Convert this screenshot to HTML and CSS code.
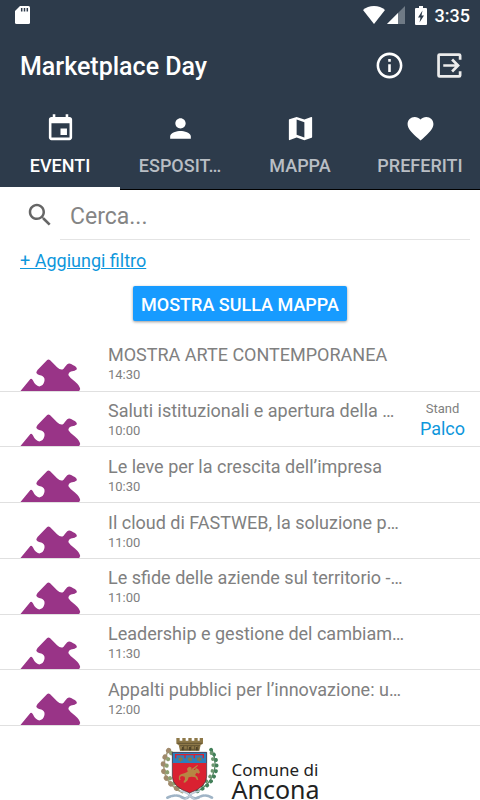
FILE: index.html
```html
<!DOCTYPE html>
<html lang="it">
<head>
    <meta charset="UTF-8">
    <meta name="viewport" content="width=device-width, initial-scale=1.0">
    <link rel="stylesheet" href="styles.css">
    <title>Marketplace Day</title>
</head>
<body>

<header class="header">
    <div class="status-bar">
        <svg class="sd" width="15" height="18" viewBox="0 0 15 18"><path fill="#fff" d="M5 0h8.500q1.500 0 1.500 1.500v15q0 1.500-1.500 1.500h-12q-1.500 0-1.500-1.500V5z"/><path stroke="#2d3b4b" stroke-width="1.500" d="M6.700 2v3.500M9.500 2v3.500M12.300 2v3.500"/></svg>
        <svg class="wifi" width="22" height="18" viewBox="0 0 22 18"><path fill="#fff" d="M11 18L0 4Q4.500 0 11 0t11 4z"/></svg>
        <svg class="signal" width="18" height="18" viewBox="0 0 18 18"><path fill="#6f7a85" d="M18 0v18H0z"/><path fill="#fff" d="M11 7v11H0z"/></svg>
        <svg class="battery" width="12" height="19" viewBox="0 0 12 19"><path fill="#fff" d="M4 0h4v2h3q1 0 1 1v15q0 1-1 1H1q-1 0-1-1V3q0-1 1-1h3z"/><path fill="#2d3b4b" d="M7.500 4.500L3 11.500h2.500L4.500 16.500 9 9.500H6.500z"/></svg>
        <span class="clock">3:35</span>
    </div>

    <div class="toolbar">
        <h1 class="title">Marketplace Day</h1>
        <button class="icon-button" type="button" aria-label="Informazioni">
            <svg width="31" height="31" viewBox="0 0 24 24"><path fill="#fff" d="M11 17h2v-6h-2v6zm1-15C6.480 2 2 6.480 2 12s4.480 10 10 10 10-4.480 10-10S17.520 2 12 2zm0 18c-4.410 0-8-3.590-8-8s3.590-8 8-8 8 3.590 8 8-3.590 8-8 8zM11 9h2V7h-2v2z"/></svg>
        </button>
        <button class="icon-button" type="button" aria-label="Esci">
            <svg width="25" height="25" viewBox="0 0 24 24" fill="none" stroke="#ececec" stroke-width="2.600"><path d="M22.200 6.500V2.500q0-1-1-1H2.500q-1 0-1 1v19q0 1 1 1h18.700q1 0 1-1v-4"/><path d="M6 12h14M14.500 6.300L20.200 12l-5.700 5.700"/></svg>
        </button>
    </div>

    <nav class="tabs">
        <button class="tab active" type="button">
            <svg viewBox="0 0 24 24"><path d="M17 12h-5v5h5v-5zM16 1v2H8V1H6v2H5c-1.110 0-1.990.9-1.990 2L3 19c0 1.100.89 2 2 2h14c1.100 0 2-.9 2-2V5c0-1.100-.9-2-2-2h-1V1h-2zm3 18H5V8h14v11z"/></svg>
            <span>EVENTI</span>
        </button>
        <button class="tab" type="button">
            <svg viewBox="0 0 24 24"><path d="M12 12c2.210 0 4-1.790 4-4s-1.790-4-4-4-4 1.790-4 4 1.790 4 4 4zm0 2c-2.670 0-8 1.340-8 4v2h16v-2c0-2.660-5.330-4-8-4z"/></svg>
            <span>ESPOSIT…</span>
        </button>
        <button class="tab" type="button">
            <svg viewBox="0 0 24 24"><path d="M20.500 3l-.16.03L15 5.100 9 3 3.360 4.900c-.21.07-.36.25-.36.48V20.500c0 .28.22.5.5.5l.16-.03L9 18.900l6 2.100 5.640-1.900c.21-.07.36-.25.36-.48V3.500c0-.28-.22-.5-.5-.5zM15 19l-6-2.110V5l6 2.110V19z"/></svg>
            <span>MAPPA</span>
        </button>
        <button class="tab" type="button">
            <svg viewBox="0 0 24 24"><path d="M12 21.350l-1.450-1.320C5.400 15.360 2 12.280 2 8.500 2 5.420 4.420 3 7.500 3c1.740 0 3.410.81 4.500 2.090C13.090 3.810 14.760 3 16.500 3 19.580 3 22 5.420 22 8.500c0 3.780-3.400 6.860-8.550 11.540L12 21.350z"/></svg>
            <span>PREFERITI</span>
        </button>
    </nav>
</header>

<!-- one symbol shared by all the rows -->
<svg class="defs" aria-hidden="true">
    <symbol id="puzzle" viewBox="61 71 182 97">
        <path fill="#993487" d="M61 168L91 132Q95 129 99 136Q106 152 118 154Q130 152 133 140Q137 126 124 121Q109 118 109 111Q110 106 120 97L142 74Q146 70 151 75L172 96Q183 106 191 101Q197 94 202 88Q209 81 221 90Q232 95 232 102Q227 107 214 109Q204 114 207 121Q212 130 226 139Q241 152 242 162L239 168Z"/>
    </symbol>
</svg>

<main class="content">
    <div class="search">
        <label for="search" aria-label="Cerca">
            <svg width="30" height="30" viewBox="0 0 24 24"><path fill="#666" d="M15.500 14h-.79l-.28-.27C15.410 12.590 16 11.110 16 9.500 16 5.910 13.090 3 9.500 3S3 5.910 3 9.500 5.910 16 9.500 16c1.610 0 3.090-.59 4.230-1.570l.27.28v.79l5 4.990L20.490 19l-4.990-5zm-6 0C7.010 14 5 11.990 5 9.500S7.010 5 9.500 5 14 7.010 14 9.500 11.990 14 9.500 14z"/></svg>
        </label>
        <input type="text" id="search" placeholder="Cerca...">
    </div>
    <a class="filter" href="#">+ Aggiungi filtro</a>
    <button class="map-button" type="button">MOSTRA SULLA MAPPA</button>

    <ul class="events">
        <li class="event">
            <svg class="piece"><use href="#puzzle"/></svg>
            <div class="info"><p class="name">MOSTRA ARTE CONTEMPORANEA</p><p class="small">14:30</p></div>
        </li>
        <li class="event">
            <svg class="piece"><use href="#puzzle"/></svg>
            <div class="info"><p class="name">Saluti istituzionali e apertura della …</p><p class="small">10:00</p></div>
            <div class="stand"><p class="small">Stand</p><a class="place" href="#">Palco</a></div>
        </li>
        <li class="event">
            <svg class="piece"><use href="#puzzle"/></svg>
            <div class="info"><p class="name">Le leve per la crescita dell’impresa</p><p class="small">10:30</p></div>
        </li>
        <li class="event">
            <svg class="piece"><use href="#puzzle"/></svg>
            <div class="info"><p class="name">Il cloud di FASTWEB, la soluzione p…</p><p class="small">11:00</p></div>
        </li>
        <li class="event">
            <svg class="piece"><use href="#puzzle"/></svg>
            <div class="info"><p class="name">Le sfide delle aziende sul territorio -…</p><p class="small">11:00</p></div>
        </li>
        <li class="event">
            <svg class="piece"><use href="#puzzle"/></svg>
            <div class="info"><p class="name">Leadership e gestione del cambiam…</p><p class="small">11:30</p></div>
        </li>
        <li class="event">
            <svg class="piece"><use href="#puzzle"/></svg>
            <div class="info"><p class="name">Appalti pubblici per l’innovazione: u…</p><p class="small">12:00</p></div>
        </li>
    </ul>
</main>

<footer class="sponsor">
    <svg class="crest" width="60" height="63" viewBox="30 36 180 189">
        <!-- branches -->
        <g fill="none" stroke-linecap="round">
            <path stroke="#a9a483" stroke-width="5" d="M58 72Q40 100 42 130Q46 176 98 203"/>
            <path stroke="#a08a6c" stroke-width="15" stroke-dasharray="1 21" d="M56 76Q36 104 40 134Q46 176 98 200"/>
            <path stroke="#8d9f70" stroke-width="12" stroke-dasharray="1 19" d="M64 84Q48 108 50 134Q56 170 96 190"/>
            <path stroke="#578762" stroke-width="4" d="M185 72Q200 104 193 136Q184 178 138 202"/>
            <path stroke="#43805a" stroke-width="11" stroke-dasharray="1 16" d="M183 74Q206 106 198 138Q188 180 140 200"/>
            <path stroke="#6d9670" stroke-width="10" stroke-dasharray="1 17" d="M184 84Q192 110 188 134Q180 168 142 190"/>
            <path stroke="#9fb4c6" stroke-width="8" stroke-dasharray="9 5" d="M52 218Q78 206 94 216Q112 226 119 210Q130 226 148 216Q164 206 186 218"/>
            <path stroke="#bccbd8" stroke-width="5" d="M92 198Q116 204 134 224M148 198Q122 204 104 224"/>
        </g>
        <!-- mural crown -->
        <path fill="#8d7848" d="M79 39h10v8h8v-8h10v8h8v-8h10v8h8v-8h10v8h6v-8h10v17l-7 4-4 18H90l-4-18-7-4z"/>
        <path stroke="#4e4228" stroke-width="2" fill="none" d="M82 55h74M90 62h60M92 73h55M101 63v10M112 63v10M123 63v10M134 63v10M144 63v10"/>
        <path fill="#4e4228" d="M96 66h5v10h-5zM117 66h6v10h-6zM138 66h5v10h-5z"/>
        <!-- shield -->
        <path fill="#d92131" d="M67 82h103v72q0 32-51 50q-52-18-52-50z"/>
        <path fill="#2b80bd" d="M67 82h103v32H67z"/>
        <path fill="none" stroke="#d92131" stroke-width="4" d="M77 100v-11h83v11M105 90v10M133 90v10"/>
        <path fill="none" stroke="#35303a" stroke-width="2" d="M67 82h103v72q0 32-51 50q-52-18-52-50z"/>
        <g fill="#8d7442">
            <path d="M92 94l3 5 4-1-2 5 2 4-5-1-2 5-3-5-4 1 1-5-2-5 5 2zM120 94l3 5 4-1-2 5 2 4-5-1-2 5-3-5-4 1 1-5-2-5 5 2zM148 94l3 5 4-1-2 5 2 4-5-1-2 5-3-5-4 1 1-5-2-5 5 2z"/>
        </g>
        <!-- knight -->
        <path fill="#b78643" d="M96 153q-9 2-4 12l-4 1q-5-13 5-18l12-4 8-4-2-9 6-6 7 2 1 7 10 1 3-6 7 4 5 9-4 4-6-3-5 7 7 5 3 9-4 1-5-8-11-2-9 2-3 9-8 7-5-1 5-9-1-8zM125 132l17-12 2 2-15 14z"/>
    </svg>
    <div class="city">
        <span class="city-small">Comune di</span>
        <span class="city-name">Ancona</span>
    </div>
</footer>

</body>
</html>
```

FILE: styles.css
```css
* {
    box-sizing: border-box;
}
body {
    display: flex;
    flex-direction: column;
    height: 100vh;
    margin: 0;
    background: #fff;
    color: #808080;
    font-family: Roboto, "Liberation Sans", sans-serif;
}
button {
    padding: 0;
    border: none;
    background: none;
    font-family: inherit;
    cursor: pointer;
}
p, h1, ul {
    margin: 0;
    padding: 0;
}
.defs {
    position: absolute;
    width: 0;
    height: 0;
}

/* header */
.header {
    background: #2d3b4b;
    color: #fff;
}
.status-bar {
    display: flex;
    align-items: center;
    height: 30px;
    padding: 0 10px 0 15px;
}
.sd {
    margin-right: auto;
}
.wifi {
    margin-right: 2px;
}
.signal {
    margin-right: 10px;
}
.battery {
    margin-right: 8px;
}
.clock {
    padding-top: 2px;
    font-size: 18px;
    font-weight: 500;
    line-height: 22px;
}
.toolbar {
    display: flex;
    align-items: center;
    height: 70px;
    padding-right: 15px;
    padding-left: 20px;
}
.title {
    flex: 1;
    padding-top: 2px;
    font-size: 25px;
    font-weight: 500;
}
.icon-button {
    display: flex;
    justify-content: center;
    align-items: center;
    width: 31px;
    height: 31px;
    margin-left: 29px;
}
.icon-button svg {
    flex: none;
}
.tabs {
    display: flex;
    height: 90px;
    border-bottom: 1px solid #000;
}
.tab {
    position: relative;
    display: flex;
    flex: 1;
    flex-direction: column;
    align-items: center;
    gap: 11px;
    padding-top: 13px;
    color: #b9bec4;
    font-size: 18px;
    font-weight: 500;
    line-height: 22px;
}
.tab svg {
    width: 31px;
    height: 31px;
    fill: #fff;
}
.tab.active {
    color: #fff;
}
.tab.active::after {
    content: "";
    position: absolute;
    right: 0;
    bottom: -1px;
    left: 0;
    height: 3px;
    background: #fff;
}

/* search and filters */
.content {
    display: flex;
    flex: 1;
    flex-direction: column;
}
.search {
    display: flex;
    align-items: center;
    height: 50px;
    padding: 0 10px 0 25px;
}
.search label {
    width: 35px;
    height: 30px;
}
.search input {
    flex: 1;
    min-width: 0;
    height: 50px;
    padding: 3px 10px 0;
    border: none;
    border-bottom: 1px solid #e4e4e4;
    outline: none;
    background: none;
    color: #444;
    font-family: inherit;
    font-size: 23px;
}
.search input::placeholder {
    color: #858585;
}
.filter {
    align-self: flex-start;
    margin: 10px 20px 0;
    color: #0e97dc;
    font-size: 18px;
    line-height: 22px;
}
.map-button {
    align-self: center;
    height: 35px;
    margin: 14px 0 15px;
    padding: 2px 8px 0;
    border-radius: 2px;
    background: #179bff;
    box-shadow: 0 1px 3px rgba(0, 0, 0, 0.4);
    color: #fff;
    font-size: 18px;
    font-weight: 500;
}

/* event list */
.events {
    display: flex;
    flex: 1;
    flex-direction: column;
    list-style: none;
}
.event {
    display: flex;
    flex: 1;
    align-items: center;
    padding: 2px 15px 0 20px;
    border-bottom: 1px solid #e0e0e0;
}
.piece {
    align-self: flex-end;
    width: 61px;
    height: 32px;
    margin-right: 27px;
}
.info {
    flex: 1;
    min-width: 0;
}
.name,
.place {
    font-size: 18px;
    line-height: 22px;
}
.small {
    font-size: 13px;
    line-height: 18px;
}
.stand {
    text-align: center;
}
.place {
    display: block;
    color: #0e97dc;
    text-decoration: none;
}

/* sponsor */
.sponsor {
    display: flex;
    justify-content: center;
    gap: 11px;
    height: 74px;
    padding-top: 11px;
    overflow: hidden;
}
.city {
    display: flex;
    flex-direction: column;
    padding-top: 23px;
    color: #222;
    font-family: "Noto Sans", "Open Sans", sans-serif;
}
.city-small {
    font-size: 17px;
    line-height: 20px;
}
.city-name {
    font-size: 25px;
    line-height: 18px;
}
```
